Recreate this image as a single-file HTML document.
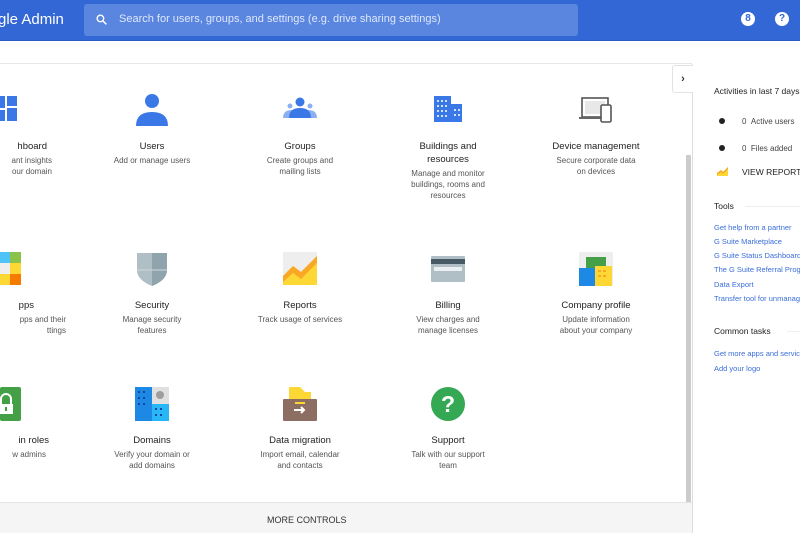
<!DOCTYPE html>
<html><head><style>
*{margin:0;padding:0;box-sizing:border-box}
body{width:800px;height:533px;overflow:hidden;background:#fff;font-family:"Liberation Sans",sans-serif;position:relative}
.hdr{position:absolute;left:0;top:0;width:800px;height:41px;background:#3367d6;border-bottom:1px solid #2a5bc4}
.logo{position:absolute;left:-2px;top:11px;color:#fff;font-size:15px}
.search{position:absolute;left:84px;top:4px;width:494px;height:32px;background:#5a86e0;border-radius:3px}
.search span{position:absolute;left:35px;top:9px;color:#dfe8fa;font-size:11px}
.hicon{position:absolute;top:12px;width:14px;height:14px;border-radius:50%;background:#fff;color:#3367d6;font-size:10px;font-weight:bold;text-align:center;line-height:14px}
.line{position:absolute;left:0;top:63px;width:692px;height:1px;background:#e6e6e6}
.item{position:absolute;width:140px;text-align:center}
.item .t{font-size:9.5px;color:#222;line-height:13px}
.item .d{font-size:8px;color:#555;line-height:11px;margin-top:2px}
.ic{position:absolute}
.bottom{position:absolute;left:0;top:502px;width:692px;height:31px;background:#f5f5f5;border-top:1px solid #e4e4e4}
.bottom span{position:absolute;left:267px;top:12px;font-size:9px;color:#333}
.scroll{position:absolute;left:686px;top:155px;width:5px;height:347px;background:#ccc}
.panel{position:absolute;left:692px;top:64px;width:108px;height:469px;border-left:1px solid #ddd;background:#fff}
.tab{position:absolute;left:672px;top:65px;width:21px;height:28px;background:#fff;border:1px solid #e2e2e2;border-right:none;border-radius:3px 0 0 3px;font-size:11px;text-align:center;line-height:26px;color:#333;font-weight:bold}
.p{position:absolute;font-size:8px;white-space:nowrap}
.lnk{color:#3a6ed9;font-size:7.5px}
</style></head><body>
<div class="hdr">
<div class="logo">gle Admin</div>
<div class="search">
<svg style="position:absolute;left:11px;top:9px" width="13" height="13" viewBox="0 0 24 24"><circle cx="10" cy="10" r="6" fill="none" stroke="#fff" stroke-width="2.5"/><path d="M14.5 14.5L21 21" stroke="#fff" stroke-width="2.8"/></svg>
<span>Search for users, groups, and settings (e.g. drive sharing settings)</span></div>
<div class="hicon" style="left:741px">8</div>
<div class="hicon" style="left:775px">?</div>
</div>
<div class="line"></div>

<svg class="ic" style="left:0;top:96px" width="18" height="26"><rect x="0" y="0" width="5" height="12" fill="#3b78e7"/><rect x="7" y="0" width="10" height="10" fill="#3b78e7"/><rect x="0" y="14" width="5" height="11" fill="#3b78e7"/><rect x="7" y="12" width="10" height="13" fill="#3b78e7"/></svg>
<svg class="ic" style="left:135px;top:92px" width="34" height="34"><circle cx="17" cy="9" r="7" fill="#3b78e7"/><path d="M1 34 Q1 20 17 20 Q33 20 33 34Z" fill="#3b78e7"/></svg>
<svg class="ic" style="left:283px;top:97px" width="34" height="22"><circle cx="17" cy="5" r="4.5" fill="#3b78e7"/><circle cx="7" cy="9" r="2.5" fill="#8ab0f0"/><circle cx="27" cy="9" r="2.5" fill="#8ab0f0"/><path d="M0 21 Q0 13 9 13 L25 13 Q34 13 34 21Z" fill="#8ab0f0"/><path d="M6 21 Q6 11 17 11 Q28 11 28 21Z" fill="#3b78e7"/></svg>
<svg class="ic" style="left:434px;top:96px" width="28" height="26"><rect x="0" y="0" width="17" height="26" fill="#3b78e7"/><rect x="17" y="8" width="11" height="18" fill="#3b78e7"/><g fill="#cfe0fb"><rect x="3" y="4" width="2" height="2"/><rect x="7" y="4" width="2" height="2"/><rect x="11" y="4" width="2" height="2"/><rect x="3" y="9" width="2" height="2"/><rect x="7" y="9" width="2" height="2"/><rect x="11" y="9" width="2" height="2"/><rect x="3" y="14" width="2" height="2"/><rect x="7" y="14" width="2" height="2"/><rect x="11" y="14" width="2" height="2"/><rect x="3" y="19" width="2" height="2"/><rect x="7" y="19" width="2" height="2"/><rect x="11" y="19" width="2" height="2"/><rect x="20" y="13" width="2" height="2"/><rect x="24" y="13" width="2" height="2"/><rect x="20" y="18" width="2" height="2"/><rect x="24" y="18" width="2" height="2"/></g></svg>
<svg class="ic" style="left:579px;top:97px" width="34" height="26"><rect x="3" y="1" width="26" height="19" fill="#fff" stroke="#555" stroke-width="1.6"/><rect x="6" y="4" width="20" height="13" fill="#e8e8e8"/><rect x="0" y="20" width="30" height="2" fill="#666"/><rect x="22" y="8" width="10" height="17" rx="1.5" fill="#fff" stroke="#555" stroke-width="1.6"/></svg>

<div class="item" style="left:-60px;top:140px"><div class="t" style="text-align:right;padding-right:33px">hboard</div><div class="d" style="text-align:right;padding-right:28px">ant insights<br>our domain</div></div>
<div class="item" style="left:82px;top:140px"><div class="t">Users</div><div class="d">Add or manage users</div></div>
<div class="item" style="left:230px;top:140px"><div class="t">Groups</div><div class="d">Create groups and<br>mailing lists</div></div>
<div class="item" style="left:378px;top:140px"><div class="t">Buildings and<br>resources</div><div class="d">Manage and monitor<br>buildings, rooms and<br>resources</div></div>
<div class="item" style="left:526px;top:140px"><div class="t">Device management</div><div class="d">Secure corporate data<br>on devices</div></div>

<svg class="ic" style="left:0;top:252px" width="21" height="33"><rect x="0" y="0" width="10" height="11" fill="#4fc3f7"/><rect x="10" y="0" width="11" height="11" fill="#8bc34a"/><rect x="0" y="11" width="10" height="11" fill="#eee"/><rect x="10" y="11" width="11" height="11" fill="#fdd835"/><rect x="0" y="22" width="10" height="11" fill="#fdd835"/><rect x="10" y="22" width="11" height="11" fill="#f57c00"/></svg>
<svg class="ic" style="left:136px;top:252px" width="32" height="34"><path d="M1 1 H31 V18 Q31 28 16 34 Q1 28 1 18Z" fill="#b0bec5"/><path d="M16 1 H31 V18 Q31 28 16 34Z" fill="#90a4ae"/><path d="M1 18 H31" stroke="#cfd8dc" stroke-width="1"/></svg>
<svg class="ic" style="left:283px;top:252px" width="34" height="33"><rect x="0" y="0" width="34" height="33" fill="#eee"/><path d="M0 24 L10 14 L18 20 L34 4 V33 H0Z" fill="#fdd835"/><path d="M0 24 L10 14 L18 20 L34 4 V11 L18 27 L10 21 L0 30Z" fill="#f9a825"/></svg>
<svg class="ic" style="left:431px;top:256px" width="34" height="26"><rect x="0" y="0" width="34" height="26" rx="1" fill="#b0bec5"/><rect x="0" y="3" width="34" height="5" fill="#455a64"/><rect x="3" y="11" width="28" height="4" fill="#eceff1"/></svg>
<svg class="ic" style="left:579px;top:252px" width="34" height="34"><rect x="0" y="0" width="34" height="34" rx="2" fill="#eee"/><rect x="7" y="5" width="20" height="20" fill="#43a047"/><rect x="0" y="16" width="16" height="18" fill="#1e88e5"/><rect x="16" y="14" width="17" height="20" fill="#fdd835"/><g fill="#f9a825"><rect x="19" y="18" width="3" height="2"/><rect x="24" y="18" width="3" height="2"/><rect x="19" y="23" width="3" height="2"/><rect x="24" y="23" width="3" height="2"/></g></svg>

<div class="item" style="left:-60px;top:299px"><div class="t" style="text-align:right;padding-right:46px">pps</div><div class="d" style="text-align:right;padding-right:14px">pps and their<br>ttings</div></div>
<div class="item" style="left:82px;top:299px"><div class="t">Security</div><div class="d">Manage security<br>features</div></div>
<div class="item" style="left:230px;top:299px"><div class="t">Reports</div><div class="d">Track usage of services</div></div>
<div class="item" style="left:378px;top:299px"><div class="t">Billing</div><div class="d">View charges and<br>manage licenses</div></div>
<div class="item" style="left:526px;top:299px"><div class="t">Company profile</div><div class="d">Update information<br>about your company</div></div>

<svg class="ic" style="left:0;top:387px" width="21" height="34"><rect x="0" y="0" width="21" height="34" rx="2" fill="#43a047"/><path d="M1 17 V12 A5 5 0 0 1 11 12 V17" fill="none" stroke="#fff" stroke-width="2"/><rect x="0" y="17" width="13" height="10" fill="#fff"/><rect x="5" y="20" width="2" height="4" fill="#43a047"/></svg>
<svg class="ic" style="left:135px;top:387px" width="34" height="34"><rect x="0" y="0" width="34" height="34" fill="#e0e0e0"/><rect x="0" y="0" width="17" height="34" fill="#1e88e5"/><rect x="17" y="17" width="17" height="17" fill="#29b6f6"/><circle cx="25" cy="8" r="4" fill="#9e9e9e"/><g fill="#0d47a1"><rect x="3" y="4" width="2" height="2"/><rect x="8" y="4" width="2" height="2"/><rect x="3" y="10" width="2" height="2"/><rect x="8" y="10" width="2" height="2"/><rect x="3" y="16" width="2" height="2"/><rect x="8" y="16" width="2" height="2"/><rect x="20" y="21" width="2" height="2"/><rect x="25" y="21" width="2" height="2"/><rect x="20" y="27" width="2" height="2"/><rect x="25" y="27" width="2" height="2"/></g></svg>
<svg class="ic" style="left:283px;top:387px" width="34" height="34"><path d="M6 0 H17 L22 5 H28 V14 H6Z" fill="#fdd835"/><rect x="0" y="12" width="34" height="22" rx="1" fill="#8d6e63"/><rect x="12" y="15" width="10" height="2" fill="#fdd835"/><path d="M11 23 H21 M18 20 L21 23 L18 26" stroke="#fff" stroke-width="2" fill="none"/></svg>
<svg class="ic" style="left:431px;top:387px" width="34" height="34"><circle cx="17" cy="17" r="17" fill="#34a853"/><text x="17" y="25" text-anchor="middle" font-family="Liberation Sans" font-weight="bold" font-size="23" fill="#fff">?</text></svg>

<div class="item" style="left:-60px;top:434px"><div class="t" style="text-align:right;padding-right:31px">in roles</div><div class="d" style="text-align:right;padding-right:34px">w admins</div></div>
<div class="item" style="left:82px;top:434px"><div class="t">Domains</div><div class="d">Verify your domain or<br>add domains</div></div>
<div class="item" style="left:230px;top:434px"><div class="t">Data migration</div><div class="d">Import email, calendar<br>and contacts</div></div>
<div class="item" style="left:378px;top:434px"><div class="t">Support</div><div class="d">Talk with our support<br>team</div></div>

<div class="scroll"></div>
<div class="bottom"><span>MORE CONTROLS</span></div>

<div class="panel">
<div class="p" style="left:21px;top:22px;font-size:8.5px;color:#222">Activities in last 7 days</div>
<div style="position:absolute;left:26px;top:54px;width:6px;height:6px;border-radius:50%;background:#222"></div>
<div class="p" style="left:49px;top:53px;color:#444">0&nbsp;&nbsp;Active users</div>
<div style="position:absolute;left:26px;top:81px;width:6px;height:6px;border-radius:50%;background:#222"></div>
<div class="p" style="left:49px;top:80px;color:#444">0&nbsp;&nbsp;Files added</div>
<svg style="position:absolute;left:24px;top:103px" width="11" height="9"><path d="M0 9 V6 L4 3 L6 5 L11 0 V9Z" fill="#fdd835"/><path d="M0 6 L4 3 L6 5 L11 0 V2 L6 7 L4 5 L0 8Z" fill="#f9a825"/></svg>
<div class="p" style="left:49px;top:103px;color:#222;font-size:8.5px">VIEW REPORTS</div>
<div class="p" style="left:21px;top:137px;color:#222;font-size:8.5px">Tools</div>
<div style="position:absolute;left:52px;top:142px;width:60px;height:1px;background:#eee"></div>
<div class="p lnk" style="left:21px;top:159px">Get help from a partner</div>
<div class="p lnk" style="left:21px;top:173px">G Suite Marketplace</div>
<div class="p lnk" style="left:21px;top:187px">G Suite Status Dashboard</div>
<div class="p lnk" style="left:21px;top:201px">The G Suite Referral Program</div>
<div class="p lnk" style="left:21px;top:216px">Data Export</div>
<div class="p lnk" style="left:21px;top:230px">Transfer tool for unmanaged</div>
<div class="p" style="left:21px;top:262px;color:#222;font-size:8.5px">Common tasks</div>
<div style="position:absolute;left:94px;top:267px;width:20px;height:1px;background:#eee"></div>
<div class="p lnk" style="left:21px;top:285px">Get more apps and services</div>
<div class="p lnk" style="left:21px;top:300px">Add your logo</div>
</div>
<div class="tab">›</div>
</body></html>
